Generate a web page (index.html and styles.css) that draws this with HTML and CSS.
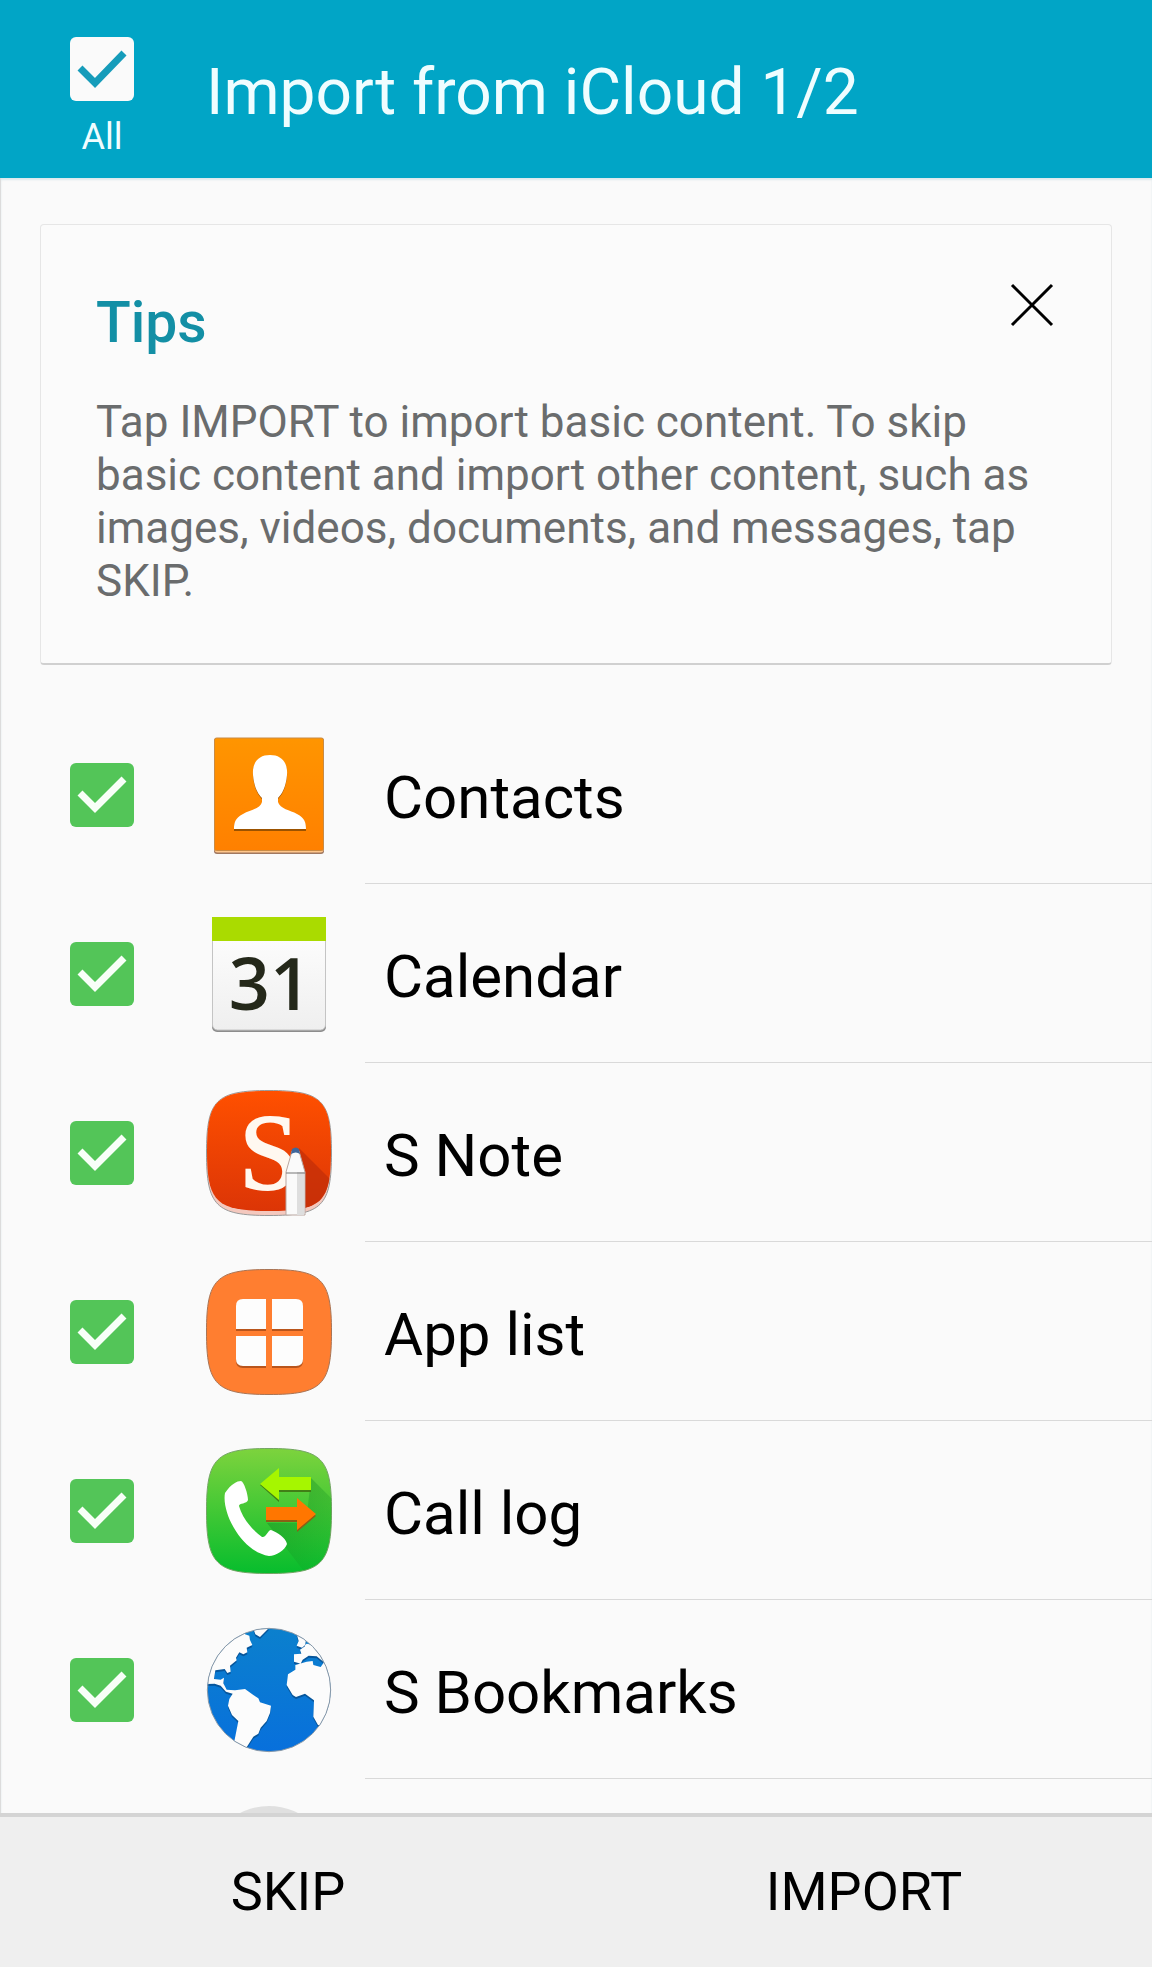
FILE: index.html
```html
<!DOCTYPE html>
<html lang="en">
<head>
<meta charset="utf-8">
<meta name="viewport" content="width=device-width, initial-scale=1">
<title>Import from iCloud</title>
<link rel="stylesheet" href="styles.css">
</head>
<body>
<div class="app">
  <header class="topbar">
    <label class="select-all">
      <span class="tick tick-all"><input type="checkbox" checked><svg viewBox="0 0 64 64" aria-hidden="true"><path d="M10 31 25 46 54 16"/></svg></span>
      <span class="select-all-text">All</span>
    </label>
    <h1 class="title">Import from iCloud 1/2</h1>
  </header>

  <main class="content">
    <section class="tips">
      <div class="tips-head">
        <h2 class="tips-title">Tips</h2>
        <button class="close" type="button" aria-label="Close tips"><svg viewBox="0 0 44 44" aria-hidden="true"><path d="M2 2 42 42M42 2 2 42"/></svg></button>
      </div>
      <p class="tips-text">Tap IMPORT to import basic content. To skip basic content and import other content, such as images, videos, documents, and messages, tap SKIP.</p>
    </section>

    <ul class="list">
      <li>
        <label class="row">
          <span class="tick"><input type="checkbox" checked><svg viewBox="0 0 64 64" aria-hidden="true"><path d="M10 30 25 45 54 16"/></svg></span>
          <svg class="icon" viewBox="0 0 126 126" aria-hidden="true">
            <defs><linearGradient id="orange" x2="0" y2="1"><stop stop-color="#ff9500"/><stop offset="1" stop-color="#ff8000"/></linearGradient></defs>
            <rect x="8" y="6" width="110" height="116" rx="3" fill="#a07860"/>
            <rect x="8.500" y="6" width="109" height="114.500" rx="3" fill="#ffc68a"/>
            <rect x="8.500" y="6" width="109" height="112.500" rx="2" fill="url(#orange)" stroke="#c98b45"/>
            <path d="M64 24c12 0 18 8 17 20-1 12-5 19-9 23v4c2 7 12 8 19 12 8 4 9 9 9 16H28c0-7 1-12 9-16 7-4 17-5 19-12v-4c-4-4-8-11-9-23-1-12 5-20 17-20z" fill="#9b5200"/>
            <path d="M64 23c12 0 18 8 17 20-1 12-5 19-9 23v4c2 7 12 8 19 12 8 4 9 9 9 15H28c0-6 1-11 9-15 7-4 17-5 19-12v-4c-4-4-8-11-9-23-1-12 5-20 17-20z" fill="#fff"/>
          </svg>
          <span class="name">Contacts</span>
        </label>
      </li>
      <li>
        <label class="row">
          <span class="tick"><input type="checkbox" checked><svg viewBox="0 0 64 64" aria-hidden="true"><path d="M10 30 25 45 54 16"/></svg></span>
          <svg class="icon" viewBox="0 0 126 126" aria-hidden="true">
            <defs><linearGradient id="paper" x2="0" y2="1"><stop stop-color="#fff"/><stop offset="1" stop-color="#efefef"/></linearGradient></defs>
            <rect x="6" y="8" width="114" height="113" rx="5" fill="#8c8c8c"/>
            <rect x="6.500" y="7" width="113" height="112" rx="5" fill="url(#paper)" stroke="#c4c4c4"/>
            <path d="M6 6h114v24H6z" fill="#aadb00"/>
            <text x="64" y="99" text-anchor="middle" class="day">31</text>
          </svg>
          <span class="name">Calendar</span>
        </label>
      </li>
      <li>
        <label class="row">
          <span class="tick"><input type="checkbox" checked><svg viewBox="0 0 64 64" aria-hidden="true"><path d="M10 30 25 45 54 16"/></svg></span>
          <svg class="icon" viewBox="0 0 126 126" aria-hidden="true">
            <defs>
              <linearGradient id="red" x2="0" y2="1"><stop stop-color="#ff5000"/><stop offset="1" stop-color="#dc3506"/></linearGradient>
              <path id="tile" d="M63 0.500C116 0.500 125.500 10 125.500 63C125.500 116 116 125.500 63 125.500C10 125.500 0.500 116 0.500 63C0.500 10 10 0.500 63 0.500z"/>
              <path id="note-face" d="M63 1C116 1 125 10 125 61C125 112 116 121 63 121C10 121 1 112 1 61C1 10 10 1 63 1z"/>
              <clipPath id="tile-clip"><use href="#tile"/></clipPath>
              <clipPath id="note-clip"><use href="#note-face"/></clipPath>
            </defs>
            <use href="#tile" fill="#f4c8be" stroke="#999"/>
            <use href="#note-face" fill="url(#red)"/>
            <path d="M93 58 126 91V122H98z" fill="#c12d08" opacity=".7" clip-path="url(#note-clip)"/>
            <text x="63" y="99" text-anchor="middle" class="note-letter">S</text>
            <path d="M80 82 86 61H93L99 82V125H80z" fill="#fafafa" stroke="#b9a6a0"/>
            <path d="M91 82H98V125H91z" fill="#dedede"/>
            <path d="M85 64 86 59Q90 56 93 59L94 64Q90 61 85 64z" fill="#40679b"/>
            <path d="M80 83H99" stroke="#777"/>
          </svg>
          <span class="name">S Note</span>
        </label>
      </li>
      <li>
        <label class="row">
          <span class="tick"><input type="checkbox" checked><svg viewBox="0 0 64 64" aria-hidden="true"><path d="M10 30 25 45 54 16"/></svg></span>
          <svg class="icon" viewBox="0 0 126 126" aria-hidden="true">
            <defs><path id="panes" d="M37 30H60V60H30V37Q30 30 37 30zM66 30H90Q97 30 97 37V60H66zM30 67H60V97H37Q30 97 30 90zM66 67H97V90Q97 97 90 97H66z"/></defs>
            <use href="#tile" fill="#ff7e30" stroke="#a87455"/>
            <use href="#panes" y="2" fill="#b9551c"/>
            <use href="#panes" fill="#fdfdfd"/>
          </svg>
          <span class="name">App list</span>
        </label>
      </li>
      <li>
        <label class="row">
          <span class="tick"><input type="checkbox" checked><svg viewBox="0 0 64 64" aria-hidden="true"><path d="M10 30 25 45 54 16"/></svg></span>
          <svg class="icon" viewBox="0 0 126 126" aria-hidden="true">
            <defs>
              <linearGradient id="green" x2="0" y2="1"><stop stop-color="#7dd33d"/><stop offset="1" stop-color="#07bd2d"/></linearGradient>
              <linearGradient id="shade" x2="1" y2="1"><stop stop-color="#138f22" stop-opacity=".6"/><stop offset="1" stop-color="#138f22" stop-opacity="0"/></linearGradient>
            </defs>
            <use href="#tile" fill="url(#green)" stroke="#74a565"/>
            <path d="M105 30 126 51V126H100L61 75H100z" fill="url(#shade)" clip-path="url(#tile-clip)"/>
            <path d="M54 37 73 21V30H105V44H73V54z" fill="#417f16"/>
            <path d="M54 36 73 20V29H105V42H73V52z" fill="#a6f600"/>
            <path d="M60 61H91V52L110 68 91 84V74H60z" fill="#8a6016"/>
            <path d="M60 59H91V50L110 66 91 82V72H60z" fill="#ff7600"/>
            <path d="M19 45C25 36 31 33 35 33 38 34 42 46 42 52 41 56 33 55 33 58 36 69 45 81 56 89 60 90 62 82 65 82 71 84 80 90 81 96 79 102 70 108 63 108 49 106 36 94 28 80 22 70 17 55 19 45z" fill="#fff"/>
          </svg>
          <span class="name">Call log</span>
        </label>
      </li>
      <li>
        <label class="row">
          <span class="tick"><input type="checkbox" checked><svg viewBox="0 0 64 64" aria-hidden="true"><path d="M10 30 25 45 54 16"/></svg></span>
          <svg class="icon" viewBox="48 36 378 378" aria-hidden="true">
            <defs>
              <linearGradient id="sea" x2="0" y2="1"><stop stop-color="#0b80cd"/><stop offset="1" stop-color="#0870dc"/></linearGradient>
              <clipPath id="globe-clip"><circle cx="237" cy="225" r="185"/></clipPath>
              <path id="land" d="M40 208V30H160L165 58 178 62 180 75 187 90 170 98 172 112 160 118 148 112 138 128 140 136 120 152 122 170 112 174 104 162 76 166 72 192 92 194 102 188 100 205 110 224 135 226 165 222 190 240 205 250 210 262 243 272 240 294 230 318 212 338 205 356 190 365 168 400 132 384 145 318 126 300 114 272 118 252 128 236 108 230 92 212 74 206zM186 30 196 58 210 66 222 54 236 40 232 30zM318 50 326 78 320 92 336 98 350 86 358 88 440 130 402 142 380 124 356 122 338 134 332 146 312 140 312 118 334 116 330 104 345 94 350 60zM316 150 350 140 368 138 370 150 392 156 402 142 450 160V340L384 330 370 305 372 256 345 236 318 246 308 240 290 210 294 178 316 164z"/>
            </defs>
            <g clip-path="url(#globe-clip)"><circle cx="237" cy="225" r="185" fill="url(#sea)"/><use href="#land" y="6" fill="#07569c"/><use href="#land" fill="#fcfcfc"/></g>
            <circle cx="237" cy="225" r="185" fill="none" stroke="#8798a8" stroke-width="3"/>
          </svg>
          <span class="name">S Bookmarks</span>
        </label>
      </li>
      <li>
        <div class="row">
          <span class="tick-space"></span>
          <svg class="icon" viewBox="0 0 126 126" aria-hidden="true"><circle cx="63" cy="63" r="63" fill="#e0e0e0"/></svg>
          <span class="name"></span>
        </div>
      </li>
    </ul>
  </main>

  <footer class="actions">
    <button class="action" type="button">SKIP</button>
    <button class="action" type="button">IMPORT</button>
  </footer>
</div>
</body>
</html>
```

FILE: styles.css
```css
* {
  box-sizing: border-box;
}

body {
  margin: 0;
  background: #fafafa;
  color: #000;
  font-family: Roboto, "Noto Sans", sans-serif;
}

h1, h2, p, ul {
  margin: 0;
  padding: 0;
}

button {
  border: 0;
  background: none;
  color: inherit;
  font: inherit;
  cursor: pointer;
}

.app {
  display: flex;
  flex-direction: column;
  height: 100vh;
}

.topbar {
  display: flex;
  flex: none;
  align-items: flex-start;
  gap: 72px;
  padding: 37px 70px 0;
  height: 178px;
  background: #01a5c6;
  color: #effdff;
}

.select-all {
  display: flex;
  flex-direction: column;
  align-items: center;
  gap: 15px;
}

.select-all-text {
  font-size: 36px;
  line-height: 42px;
}

.title {
  padding-top: 18px;
  font-size: 64px;
  font-weight: 400;
  line-height: 76px;
}

/* Checkbox with a drawn tick on top */
.tick {
  display: grid;
  flex: none;
  width: 64px;
  height: 64px;
}

.tick > * {
  grid-area: 1 / 1;
}

.tick input {
  appearance: none;
  width: 64px;
  height: 64px;
  margin: 0;
  border-radius: 6px;
  background: #53c558;
}

.tick svg {
  fill: none;
  stroke: #f8fff8;
  stroke-width: 7;
  visibility: hidden;
  pointer-events: none;
}

.tick input:checked + svg {
  visibility: visible;
}

.tick-all input {
  background: #fafafa;
}

.tick-all svg {
  stroke: #169cba;
}

.content {
  flex: 1;
  min-height: 0;
  overflow: hidden;
  border-left: 1px solid #dcdcdc;
  box-shadow: inset 0 2px 2px #dce8ec;
}

.tips {
  margin: 46px 40px 40px 39px;
  padding: 58px 57px 55px 55px;
  border: 1px solid #e6e6e6;
  border-bottom: 2px solid #d0d0d0;
  border-radius: 4px;
  background: #fbfbfb;
}

.tips-head {
  display: flex;
  align-items: flex-start;
  justify-content: space-between;
  margin-bottom: 40px;
}

.tips-title {
  padding-top: 6px;
  color: #138fa5;
  font-size: 57px;
  font-weight: 500;
  line-height: 67px;
}

.close {
  width: 44px;
  height: 44px;
  padding: 0;
}

.close svg {
  display: block;
  fill: none;
  stroke: #000;
  stroke-width: 3;
}

.tips-text {
  color: #6a6c6d;
  font-size: 44px;
  line-height: 53px;
}

.list {
  list-style: none;
}

.row {
  display: flex;
  align-items: center;
  height: 179px;
  padding-left: 69px;
}

.tick-space {
  width: 64px;
}

.icon {
  flex: none;
  width: 126px;
  height: 126px;
  margin: 0 33px 0 72px;
}

.name {
  flex: 1;
  align-self: stretch;
  padding: 58px 19px 0;
  border-bottom: 1px solid #d9d9d9;
  font-size: 60px;
  line-height: 70px;
}

.day {
  fill: #24281a;
  font: 600 72px "Open Sans", sans-serif;
}

.note-letter {
  fill: #fff8f0;
  stroke: #fff8f0;
  stroke-width: 2;
  font: 107px "Liberation Serif", serif;
}

.actions {
  display: grid;
  flex: none;
  grid-template-columns: 1fr 1fr;
  height: 154px;
  border-top: 4px solid #d4d4d4;
  background: #efefef;
}

.action {
  font-size: 54px;
  line-height: 64px;
}
```
